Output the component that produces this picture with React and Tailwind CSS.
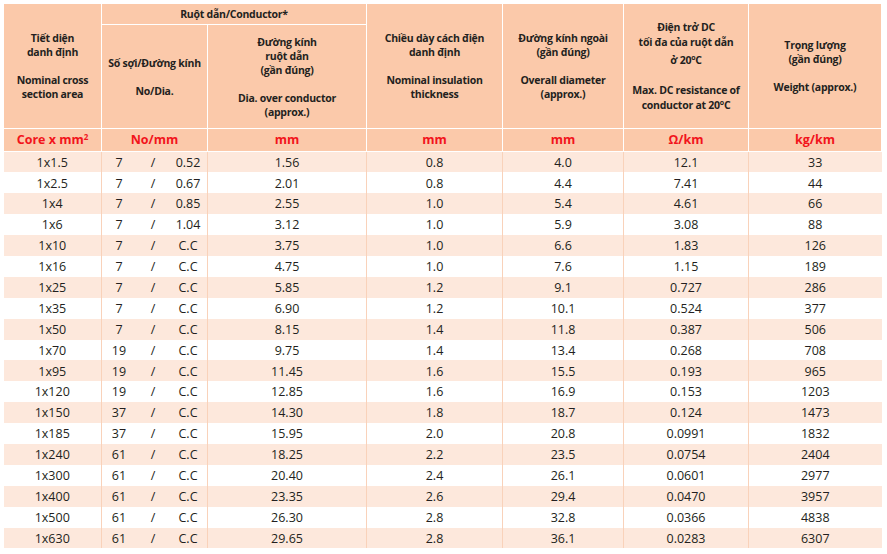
const rows = [
  ["1x1.5", "7", "0.52", "1.56", "0.8", "4.0", "12.1", "33"],
  ["1x2.5", "7", "0.67", "2.01", "0.8", "4.4", "7.41", "44"],
  ["1x4", "7", "0.85", "2.55", "1.0", "5.4", "4.61", "66"],
  ["1x6", "7", "1.04", "3.12", "1.0", "5.9", "3.08", "88"],
  ["1x10", "7", "C.C", "3.75", "1.0", "6.6", "1.83", "126"],
  ["1x16", "7", "C.C", "4.75", "1.0", "7.6", "1.15", "189"],
  ["1x25", "7", "C.C", "5.85", "1.2", "9.1", "0.727", "286"],
  ["1x35", "7", "C.C", "6.90", "1.2", "10.1", "0.524", "377"],
  ["1x50", "7", "C.C", "8.15", "1.4", "11.8", "0.387", "506"],
  ["1x70", "19", "C.C", "9.75", "1.4", "13.4", "0.268", "708"],
  ["1x95", "19", "C.C", "11.45", "1.6", "15.5", "0.193", "965"],
  ["1x120", "19", "C.C", "12.85", "1.6", "16.9", "0.153", "1203"],
  ["1x150", "37", "C.C", "14.30", "1.8", "18.7", "0.124", "1473"],
  ["1x185", "37", "C.C", "15.95", "2.0", "20.8", "0.0991", "1832"],
  ["1x240", "61", "C.C", "18.25", "2.2", "23.5", "0.0754", "2404"],
  ["1x300", "61", "C.C", "20.40", "2.4", "26.1", "0.0601", "2977"],
  ["1x400", "61", "C.C", "23.35", "2.6", "29.4", "0.0470", "3957"],
  ["1x500", "61", "C.C", "26.30", "2.8", "32.8", "0.0366", "4838"],
  ["1x630", "61", "C.C", "29.65", "2.8", "36.1", "0.0283", "6307"],
];

const widths = [98, 106, 159, 136, 121, 125, 133];

function Head({ children, className = "", ...props }) {
  return (
    <th
      {...props}
      className={`whitespace-nowrap border border-white bg-[#fbc9aa] p-0 text-center align-middle text-[10.5px] font-bold leading-[14px] tracking-[-0.25px] text-[#231f20] ${className}`}
    >
      {children}
    </th>
  );
}

function Unit({ children }) {
  return (
    <td className="h-[23px] border border-white bg-[#fbc9aa] text-center align-middle text-[12.5px] font-bold text-[#f2141b]">
      {children}
    </td>
  );
}

export default function App() {
  return (
    <div className="h-[554px] w-[887px] bg-white pl-[3px] pt-[3px] font-['Open_Sans',sans-serif]">
      <table className="table-fixed border-collapse">
        <colgroup>
          {widths.map((w, i) => (
            <col key={i} style={{ width: w }} />
          ))}
        </colgroup>
        <thead>
          <tr className="h-[21px]">
            <Head rowSpan={2}>
              Tiết diện
              <br />
              danh định
              <br />
              <br />
              Nominal cross
              <br />
              section area
            </Head>
            <Head colSpan={2}>Ruột dẫn/Conductor*</Head>
            <Head rowSpan={2}>
              Chiều dày cách điện
              <br />
              danh định
              <br />
              <br />
              Nominal insulation
              <br />
              thickness
            </Head>
            <Head rowSpan={2}>
              Đường kính ngoài
              <br />
              (gần đúng)
              <br />
              <br />
              Overall diameter
              <br />
              (approx.)
            </Head>
            <Head rowSpan={2} className="leading-[15px]">
              Điện trở DC
              <br />
              tối đa của ruột dẫn
              <br />
              <span className="mt-[3px] inline-block">
                ở 20<sup className="text-[7px]">o</sup>C
              </span>
              <br />
              <br />
              Max. DC resistance of
              <br />
              conductor at 20<sup className="text-[7px]">o</sup>C
            </Head>
            <Head rowSpan={2}>
              Trọng lượng
              <br />
              (gần đúng)
              <br />
              <br />
              Weight (approx.)
            </Head>
          </tr>
          <tr className="h-[104px]">
            <Head>
              Số sợi/Đường kính
              <br />
              <br />
              No/Dia.
            </Head>
            <Head>
              Đường kính
              <br />
              ruột dẫn
              <br />
              (gần đúng)
              <br />
              <br />
              Dia. over conductor
              <br />
              (approx.)
            </Head>
          </tr>
          <tr>
            <Unit>
              Core x mm<sup className="text-[8px]">2</sup>
            </Unit>
            <Unit>No/mm</Unit>
            <Unit>mm</Unit>
            <Unit>mm</Unit>
            <Unit>mm</Unit>
            <Unit>Ω/km</Unit>
            <Unit>kg/km</Unit>
          </tr>
        </thead>
        <tbody className="text-[12.5px] text-[#231f20]">
          {rows.map((r, i) => (
            <tr
              key={r[0]}
              className={`h-[20.9px] ${i % 2 === 0 ? "bg-[#fde8dc]" : "bg-white"}`}
            >
              <td className="border-r border-[#f9d2ba] p-0 pt-[2px] text-center leading-none">
                {r[0]}
              </td>
              <td className="border-r border-[#f9d2ba] p-0 pt-[2px] leading-none">
                <div className="grid grid-cols-[34px_34px_36px] items-center">
                  <span className="text-center">{r[1]}</span>
                  <span className="text-center">/</span>
                  <span className="text-center">{r[2]}</span>
                </div>
              </td>
              {r.slice(3).map((v, j) => (
                <td
                  key={j}
                  className={`p-0 pt-[2px] text-center leading-none ${
                    j < 4 ? "border-r border-[#f9d2ba]" : ""
                  }`}
                >
                  {v}
                </td>
              ))}
            </tr>
          ))}
        </tbody>
      </table>
    </div>
  );
}
